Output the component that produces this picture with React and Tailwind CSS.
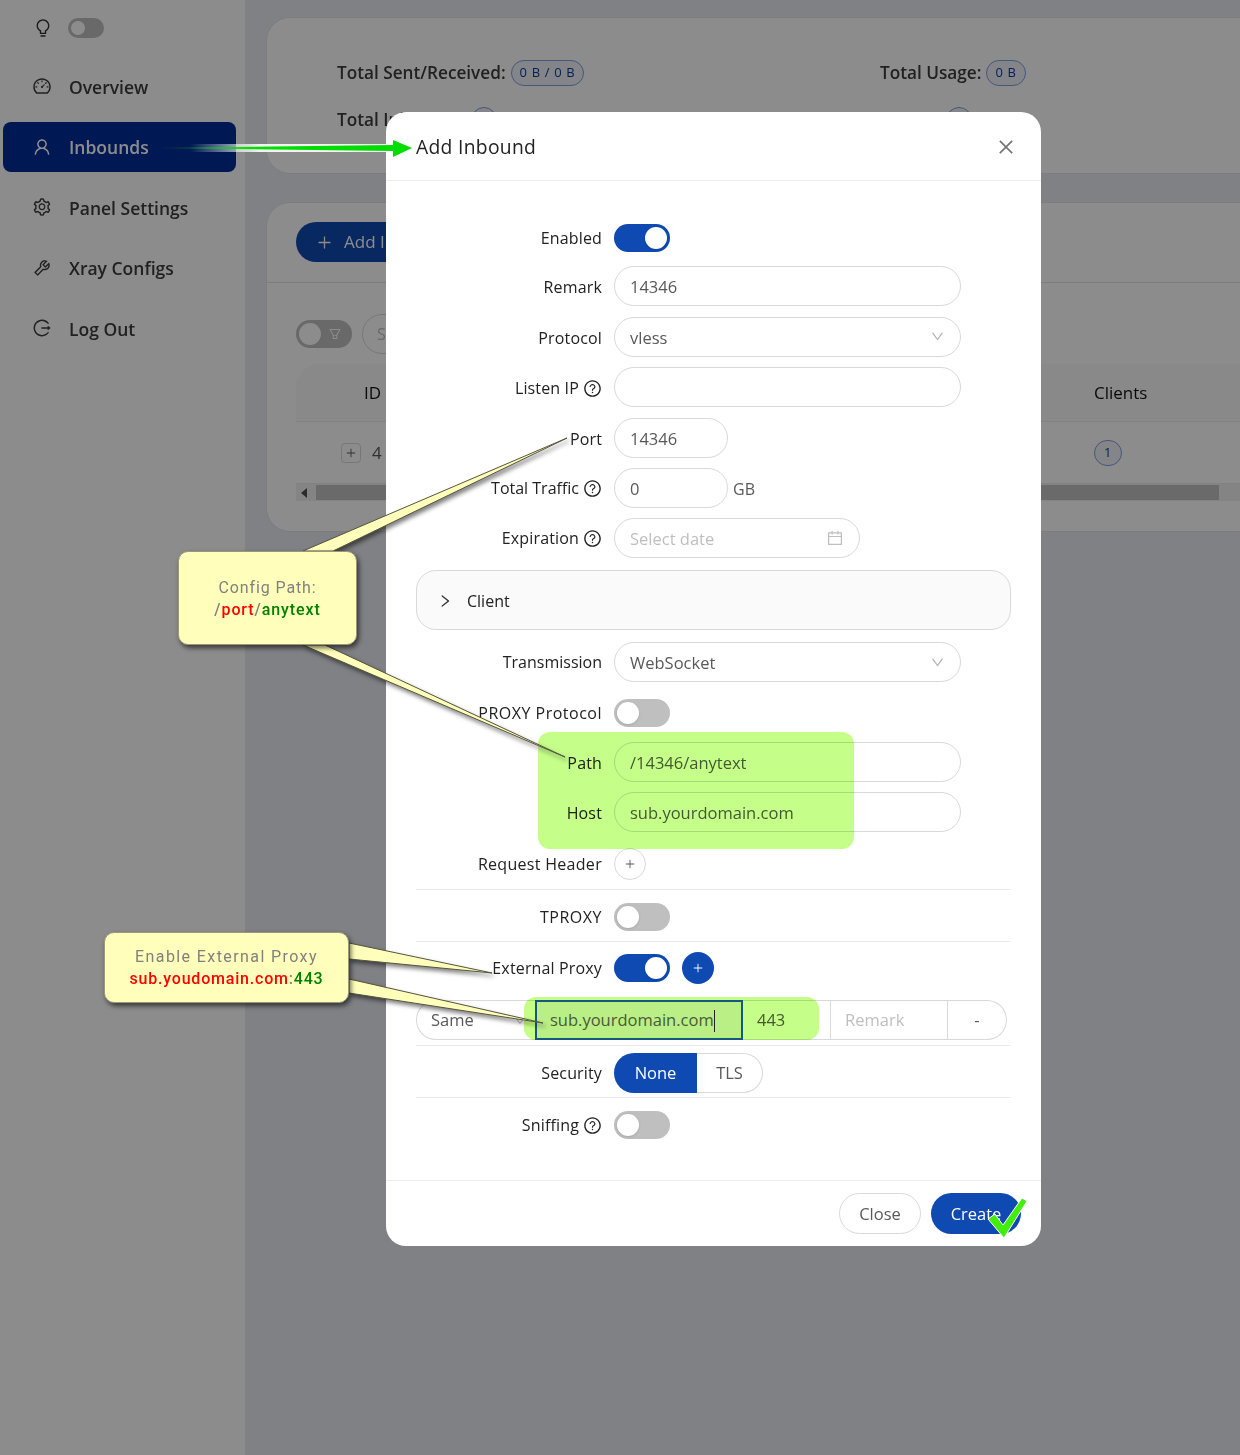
import {
  AiOutlineBulb,
  AiOutlineCalendar,
  AiOutlineClose,
  AiOutlineDashboard,
  AiOutlineDown,
  AiOutlineFilter,
  AiOutlineLogout,
  AiOutlinePlus,
  AiOutlineQuestionCircle,
  AiOutlineRight,
  AiOutlineSetting,
  AiOutlineTool,
  AiOutlineUser,
} from 'react-icons/ai';

const menu = [
  { label: 'Overview', icon: AiOutlineDashboard },
  { label: 'Inbounds', icon: AiOutlineUser, active: true },
  { label: 'Panel Settings', icon: AiOutlineSetting },
  { label: 'Xray Configs', icon: AiOutlineTool },
  { label: 'Log Out', icon: AiOutlineLogout },
];

const Tag = ({ children, className = 'px-2' }) => (
  <span className={`inline-flex h-[26px] items-center justify-center rounded-full border border-[#7f9fe0] bg-[#f0f3fa] text-[13px] font-normal tracking-wider text-[#0f3a9c] ${className}`}>
    {children}
  </span>
);

const Switch = ({ on }) => (
  <div className={`flex h-7 w-14 items-center rounded-full px-[3px] ${on ? 'justify-end bg-[#0f4ab3]' : 'justify-start bg-[#bfbfbf]'}`}>
    <div className="h-[22px] w-[22px] rounded-full bg-white shadow" />
  </div>
);

// rows holding an input have their label sitting 2px lower than the switch rows
const Row = ({ label, help, field, className = 'mb-[10.5px]', labelClass = 'tracking-[0.15px]', children }) => (
  <div className={`flex h-10 items-center gap-3 ${className}`}>
    <div className={`flex w-[186px] items-center justify-end gap-1 text-[#222] ${field ? 'pt-[2px]' : ''}`}>
      <span className={labelClass}>{label}</span>
      {help && <AiOutlineQuestionCircle className="text-[19px] text-[#222]" />}
    </div>
    {children}
  </div>
);

const Field = ({ children, className = 'w-[347px]', muted }) => (
  <div className={`flex h-10 items-center rounded-full border border-[#d9d9d9] bg-white pl-[15px] pr-[15px] pt-[3px] text-[16.5px] ${muted ? 'text-[#bfbfbf]' : 'text-[#595959]'} ${className}`}>
    {children}
  </div>
);

const Select = ({ value }) => (
  <Field className="w-[347px] justify-between">
    <span>{value}</span>
    <AiOutlineDown className="-mt-[3px] text-[15px] text-[#b3b3b3]" />
  </Field>
);

const Divider = ({ className }) => <div className={`h-px bg-[#ececec] ${className}`} />;

const Sidebar = () => (
  <aside className="h-full w-[245px] flex-none bg-white">
    <div className="flex h-[61px] items-center gap-[15px] pb-[5px] pl-[33px]">
      <AiOutlineBulb className="text-[20px] text-[#333]" />
      <div className="flex h-5 w-9 items-center rounded-full bg-[#bfbfbf] px-[3px]">
        <div className="h-[14px] w-[14px] rounded-full bg-white" />
      </div>
    </div>
    <nav className="flex flex-col gap-[10.5px] pl-[3px] pr-[9px]">
      {menu.map((item) => (
        <div
          key={item.label}
          className={`flex h-[50px] items-center gap-[17px] rounded-lg pl-[29px] text-[17.5px] font-semibold ${item.active ? 'bg-[#002f99] text-white' : 'text-[#3c3c3c]'}`}
        >
          <item.icon className="text-[20px]" />
          <span className="pt-[2px]">{item.label}</span>
        </div>
      ))}
    </nav>
  </aside>
);

const Background = () => (
  <main className="flex h-full w-[995px] flex-none flex-col gap-[28px] overflow-hidden bg-[#e9ebf2] pl-[21px] pt-[17px]">
    <section className="h-[157px] w-[1000px] flex-none rounded-3xl border border-[#e4e4e4] bg-white pl-[70px] pt-[42px]">
      <div className="grid grid-cols-[543px_1fr] gap-y-[21px] text-[17.2px] font-semibold text-[#3c3c3c]">
        <div className="flex h-[26px] items-center gap-[5px]">Total Sent/Received: <Tag>0 B / 0 B</Tag></div>
        <div className="flex h-[26px] items-center gap-[5px]">Total Usage: <Tag>0 B</Tag></div>
        <div className="flex h-[26px] items-center gap-[5px]">Total Inbounds: <Tag>1</Tag></div>
        <div className="flex h-[26px] items-center gap-[5px]">Clients: <Tag>1</Tag></div>
      </div>
    </section>
    <section className="h-[330px] w-[1000px] flex-none rounded-3xl border border-[#e4e4e4] bg-white">
      <div className="h-[80px] border-b border-[#e4e4e4] pl-[29px] pt-[19px]">
        <div className="flex h-10 w-[200px] items-center gap-[11px] rounded-full bg-[#0f4ab3] pl-5 text-[17px] text-white">
          <AiOutlinePlus className="text-[17px]" /> Add Inbound
        </div>
      </div>
      <div className="flex h-[81px] items-center gap-[10px] pl-[29px] pt-5">
        <div className="flex h-7 w-14 items-center justify-between rounded-full bg-[#bfbfbf] pl-[3px] pr-[10px]">
          <div className="h-[22px] w-[22px] rounded-full bg-white" />
          <AiOutlineFilter className="text-[14px] text-white" />
        </div>
        <div className="flex h-10 w-[200px] items-center rounded-full border border-[#d9d9d9] pl-[14px] text-[#bfbfbf]">Search</div>
      </div>
      <div className="ml-[29px] flex h-[58px] items-center rounded-t-3xl border-b border-[#ececec] bg-[#fafafa] text-[17px] font-medium text-[#111]">
        <span className="ml-[68px] w-[730px]">ID</span>
        <span>Clients</span>
      </div>
      <div className="ml-[29px] flex h-[62px] items-center border-b border-[#ececec] text-[#595959]">
        <div className="ml-[45px] flex h-5 w-5 items-center justify-center rounded-sm border border-[#d9d9d9]">
          <AiOutlinePlus className="text-[12px]" />
        </div>
        <span className="ml-[11px] w-[722px] text-[17px]">4</span>
        <Tag className="h-7 w-7">1</Tag>
      </div>
      <div className="ml-[29px] flex h-[17px] items-center bg-[#f1f1f1]">
        <div className="ml-[5px] h-0 w-0 border-y-[5px] border-r-[6px] border-y-transparent border-r-[#505050]" />
        <div className="ml-[9px] h-[15px] w-[903px] bg-[#c1c1c1]" />
      </div>
    </section>
  </main>
);

const ModalBody = () => (
  <div className="px-[30px] pt-[37px] pb-[35px]">
    <Row label="Enabled" className="mb-2"><Switch on /></Row>
    <Row field label="Remark"><Field>14346</Field></Row>
    <Row field label="Protocol"><Select value="vless" /></Row>
    <Row field label="Listen IP" help><Field /></Row>
    <Row field label="Port"><Field className="w-[114px]">14346</Field></Row>
    <Row label="Total Traffic" help className="mb-[10px]" labelClass="">
      <Field className="w-[114px]">0</Field>
      <span className="-ml-[7px] pt-px text-[#595959]">GB</span>
    </Row>
    <Row label="Expiration" help className="mb-3">
      <Field className="w-[246px] justify-between" muted>
        <span>Select date</span>
        <AiOutlineCalendar className="-mt-[3px] text-[18px]" />
      </Field>
    </Row>

    <div className="mb-3 flex h-[60px] items-center gap-[14px] rounded-[20px] border border-[#d9d9d9] bg-[#fafafa] pl-[20px] pt-[2px] text-[#222]">
      <AiOutlineRight className="text-[16px] text-[#333]" />
      <span>Client</span>
    </div>

    <Row label="Transmission" className="mb-[11px]" labelClass=""><Select value="WebSocket" /></Row>
    <Row label="PROXY Protocol" className="mb-[9px]" labelClass="tracking-[0.5px]"><Switch /></Row>
    <Row field label="Path" className="mb-[10px]"><Field>/14346/anytext</Field></Row>
    <Row field label="Host" className="mb-3"><Field>sub.yourdomain.com</Field></Row>
    <Row label="Request Header" className="" labelClass="tracking-[0.3px]">
      <div className="flex h-8 w-8 items-center justify-center rounded-full border border-[#d9d9d9] text-[#595959]">
        <AiOutlinePlus className="text-[12px]" />
      </div>
    </Row>
    <Divider className="mt-[5px] mb-[7px]" />
    <Row label="TPROXY" className="" labelClass="tracking-[0.5px]"><Switch /></Row>
    <Divider className="mt-1 mb-[6px]" />
    <Row label="External Proxy" className="mb-3">
      <Switch on />
      <div className="flex h-8 w-8 items-center justify-center rounded-full bg-[#0f4ab3] text-white">
        <AiOutlinePlus className="text-[12px]" />
      </div>
    </Row>
    <div className="flex h-10 w-[591px] text-[16.5px] text-[#595959]">
      <div className="flex w-[119px] items-center justify-between rounded-l-full border border-r-0 border-[#d9d9d9] pl-[14px] pr-[9px] pt-px">
        <span>Same</span>
        <AiOutlineDown className="text-[12px] text-[#b3b3b3]" />
      </div>
      <div className="relative z-10 flex w-[208px] items-center border-2 border-[#14587c] bg-[#b9ef85] pl-[13px] pt-px text-[#4a5a3a]">
        <span>sub.yourdomain.com</span>
        <span className="h-[22px] w-px bg-[#222]" />
      </div>
      <div className="flex w-[87px] items-center border-y border-[#d9d9d9] pl-[14px] pt-px">443</div>
      <div className="flex w-[118px] items-center border border-[#d9d9d9] pl-[14px] pt-px text-[#bfbfbf]">Remark</div>
      <div className="flex w-[59px] items-center justify-center rounded-r-full border border-l-0 border-[#d9d9d9]">-</div>
    </div>
    <Divider className="mt-[5px] mb-[7px]" />
    <Row label="Security" className="">
      <div className="flex h-10 text-[16.5px]">
        <div className="flex w-[83px] items-center justify-center rounded-l-full bg-[#0f4ab3] text-white">None</div>
        <div className="flex w-[66px] items-center justify-center rounded-r-full border border-l-0 border-[#d9d9d9] text-[#595959]">TLS</div>
      </div>
    </Row>
    <Divider className="mt-1 mb-[7px]" />
    <Row label="Sniffing" help className=""><Switch /></Row>
  </div>
);

const Modal = () => (
  <div className="absolute left-[386px] top-[112px] h-[1134px] w-[655px] rounded-[20px] bg-white font-['Open_Sans',sans-serif] text-base">
    <header className="flex h-[69px] items-center justify-between border-b border-[#ececec] pl-[30px] pr-[25px] pt-[2px]">
      <h2 className="text-[19.3px] font-medium tracking-[0.3px] text-[#222]">Add Inbound</h2>
      <AiOutlineClose className="text-[20px] text-[#737373]" />
    </header>
    <ModalBody />
    <footer className="flex items-center justify-end gap-[10px] border-t border-[#ececec] pr-5 pt-3 text-[16.5px]">
      <div className="flex h-[41px] w-[82px] items-center justify-center rounded-full border border-[#d9d9d9] pt-px text-[#595959]">Close</div>
      <div className="flex h-[41px] w-[90px] items-center justify-center rounded-full bg-[#0f4ab3] pt-px text-white">Create</div>
    </footer>
  </div>
);

const Callout = ({ className, children }) => (
  <div className={`absolute z-20 flex flex-col items-center justify-center rounded-[10px] border border-[#99997a] bg-[#ffffbb] pt-px font-['Roboto',sans-serif] text-base leading-[22px] tracking-[0.9px] shadow-[2px_3px_5px_rgba(0,0,0,0.6)] ${className}`}>
    {children}
  </div>
);

const Annotations = () => (
  <>
    <div className="absolute left-[538px] top-[732px] h-[117px] w-[316px] rounded-xl bg-[#c5ff8a] mix-blend-multiply" />
    <div className="absolute left-[524px] top-[997px] h-[43px] w-[295px] rounded-xl bg-[#c5ff8a] mix-blend-multiply" />
    <svg className="absolute left-0 top-0 z-20 drop-shadow-[2px_3px_2px_rgba(0,0,0,0.5)]" width="1240" height="1455">
      <g stroke="#55553f" strokeWidth="1" strokeLinejoin="round" fill="#ffffbb">
        <polygon points="303,551 333,551 567,438" />
        <polygon points="303,645 325,645 565,757" />
        <polygon points="349,943 349,959 492,973" />
        <polygon points="349,979 349,993 543,1023" />
      </g>
    </svg>
    <svg className="absolute left-0 top-0 z-20" width="1240" height="1455">
      <defs>
        <linearGradient id="arrowFade" gradientUnits="userSpaceOnUse" x1="150" y1="0" x2="250" y2="0">
          <stop offset="0" stopColor="#00dd00" stopOpacity="0" />
          <stop offset="1" stopColor="#00dd00" />
        </linearGradient>
        <linearGradient id="haloFade" gradientUnits="userSpaceOnUse" x1="190" y1="0" x2="260" y2="0">
          <stop offset="0" stopColor="#ffffff" stopOpacity="0" />
          <stop offset="1" stopColor="#ffffff" stopOpacity="0.9" />
        </linearGradient>
      </defs>
      <polygon points="190,144 391,144 391,138 414,148 391,159 391,152 190,152" fill="url(#haloFade)" />
      <polygon points="150,148 393,145 393,140 412,148 393,157 393,151" fill="url(#arrowFade)" />
      <polygon points="988,1219 995,1214 1003,1225 1022,1198 1027,1201 1004,1238" fill="#44ee0c" stroke="#fff" strokeWidth="1" />
    </svg>
    <Callout className="left-[178px] top-[551px] h-[94px] w-[179px]">
      <span className="text-[#808080]">Config Path:</span>
      <span className="font-medium">
        <span className="text-[#808080]">/</span>
        <span className="text-[#ff0000]">port</span>
        <span className="text-[#808080]">/</span>
        <span className="text-[#008000]">anytext</span>
      </span>
    </Callout>
    <Callout className="left-[104px] top-[932px] h-[71px] w-[245px]">
      <span className="tracking-[1.4px] text-[#808080]">Enable External Proxy</span>
      <span className="font-medium tracking-[0.8px]">
        <span className="text-[#ff0000]">sub.youdomain.com</span>
        <span className="text-[#808080]">:</span>
        <span className="text-[#008000]">443</span>
      </span>
    </Callout>
  </>
);

export default function App() {
  return (
    <div className="relative h-[1455px] w-[1240px] overflow-hidden font-['Open_Sans',sans-serif] text-base">
      <div className="flex h-full">
        <Sidebar />
        <Background />
      </div>
      <div className="absolute inset-0 bg-black/45" />
      <Modal />
      <Annotations />
    </div>
  );
}
